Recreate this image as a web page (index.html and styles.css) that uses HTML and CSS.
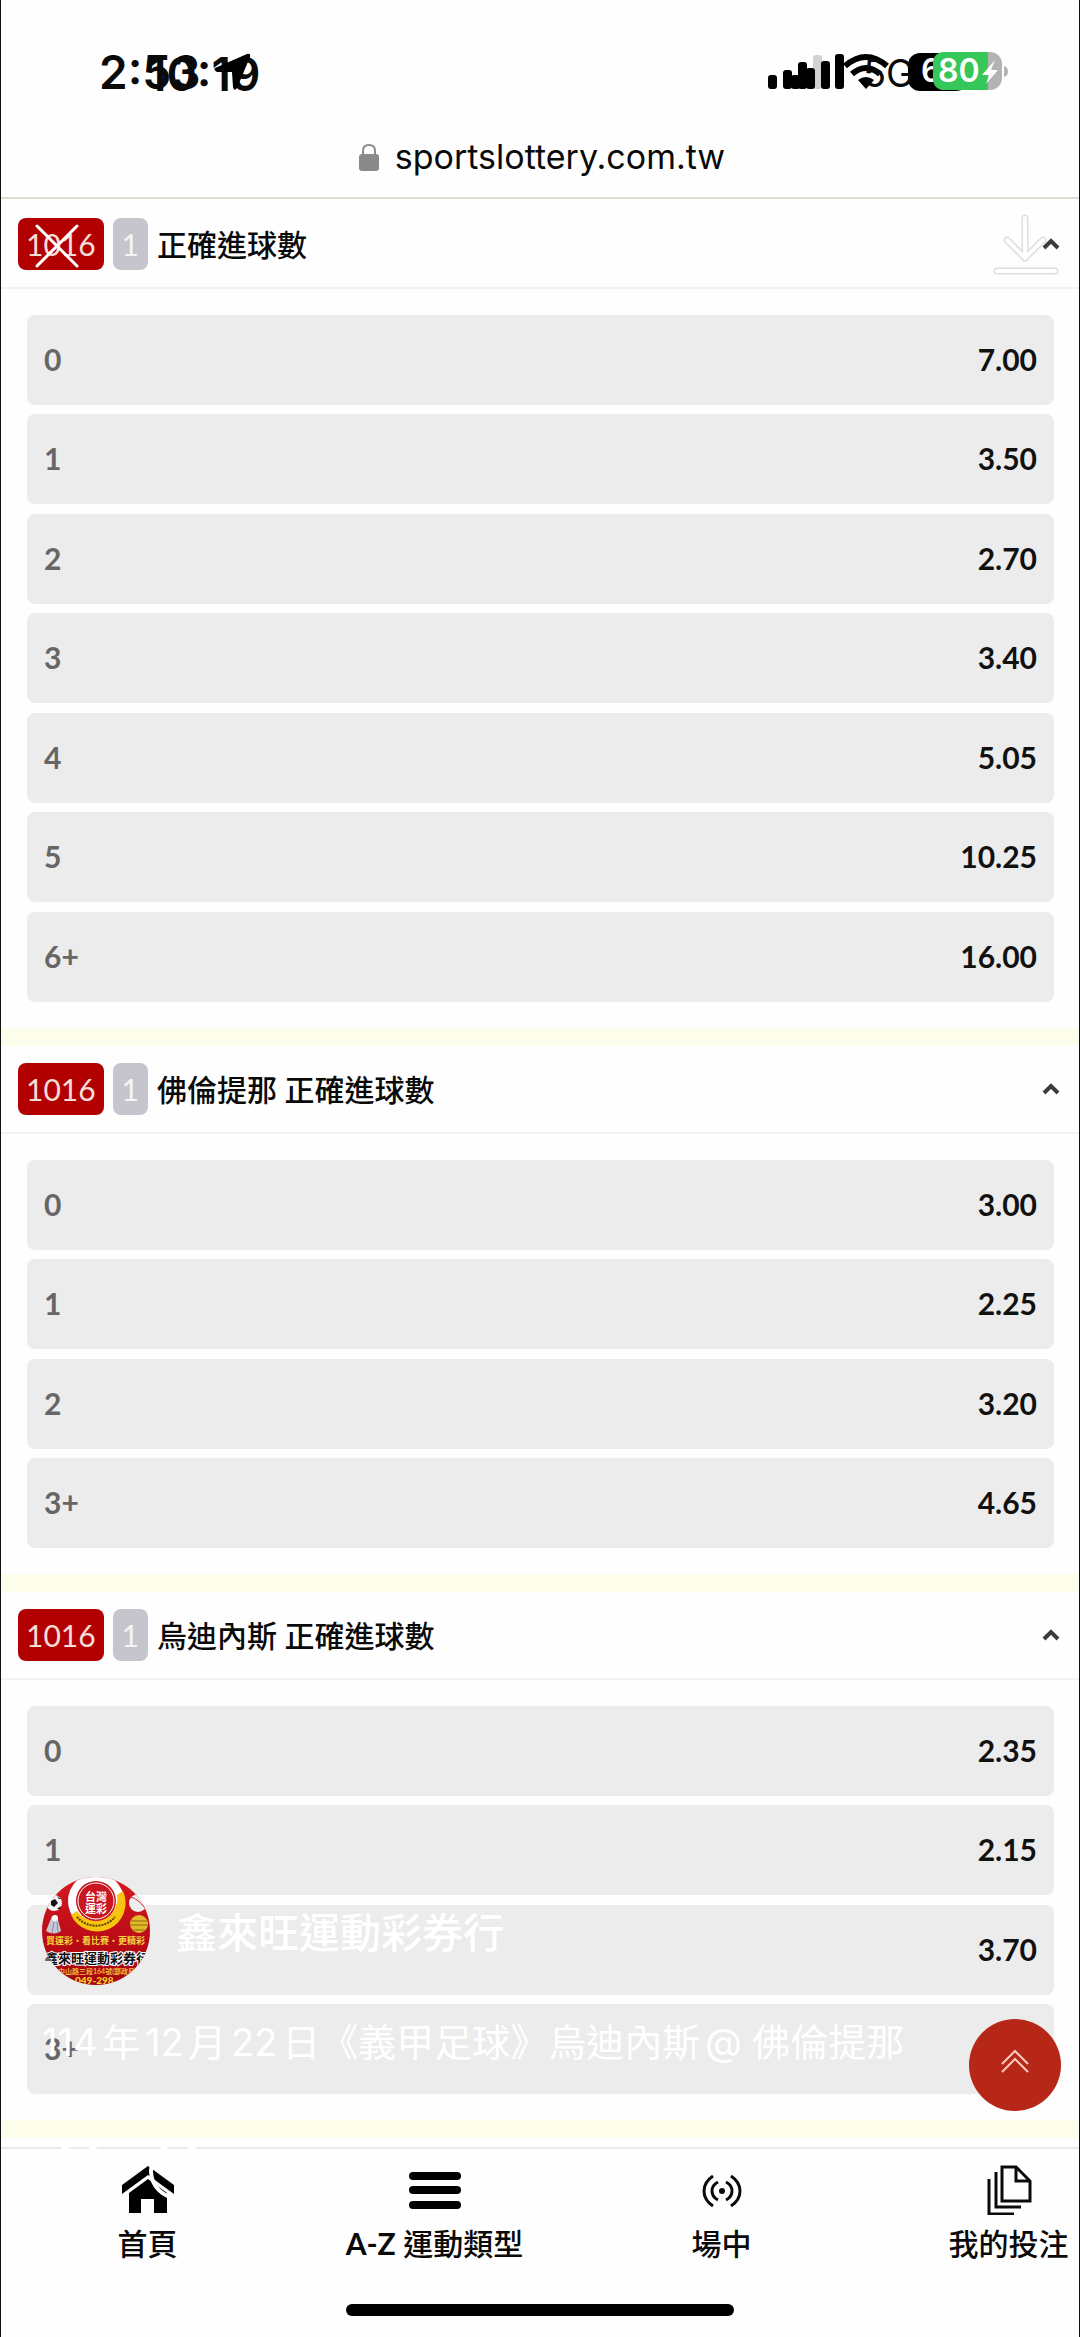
FILE: index.html
```html
<!DOCTYPE html>
<html lang="zh-Hant">

<head>
    <meta charset="utf-8">
    <title>正確進球數</title>
    <meta name="viewport" content="width=device-width, initial-scale=1">
    <link rel="stylesheet" href="styles.css">
</head>

<body>
    <div class="screen">
        <header class="status">
            <div class="clock">
                <span class="time">2:53</span>
                <span class="time time_over">10:19</span>
                <svg class="arrow" width="40" height="38" viewBox="0 0 40 38">
                    <path d="M2 15 L34 1 Q38 0 37 4 L24 35 Q21 39 20 34 L19 19 L4 19 Q0 17 2 15Z" />
                </svg>
            </div>
            <div class="signal">
                <svg width="242" height="42" viewBox="0 0 242 42">
                    <rect x="47" y="5" width="9" height="34" rx="3" fill="#d2d2d2" />
                    <rect x="2" y="25" width="9" height="14" rx="3" />
                    <rect x="17" y="20" width="9" height="19" rx="3" />
                    <rect x="25" y="25" width="9" height="14" rx="3" />
                    <rect x="32" y="12" width="9" height="27" rx="3" />
                    <rect x="40" y="18" width="9" height="21" rx="3" />
                    <rect x="55" y="11" width="9" height="28" rx="3" />
                    <rect x="69" y="4" width="9" height="35" rx="3" />
                    <g fill="none" stroke="#000" stroke-width="6">
                        <path d="M79 16 Q100 -2 121 16" />
                        <path d="M86 24 Q100 12 114 24" />
                    </g>
                    <path d="M92 30 Q100 24 108 30 L100 39Z" />
                    <rect x="142" y="3" width="60" height="38" rx="12" />
                </svg>
                <span class="network">5G</span>
                <span class="battery battery_under">6</span>
                <svg class="charge" width="76" height="42" viewBox="0 0 76 42">
                    <rect x="1" y="2" width="69" height="38" rx="12" fill="#b3b3b3" />
                    <path d="M13 2 H56 V40 H13 Q1 40 1 28 V14 Q1 2 13 2Z" fill="#35c759" />
                    <path d="M72 16 Q76 17 76 22 Q76 26 72 27Z" fill="#b3b3b3" />
                    <path d="M63 10 L50 25 H57 L54 34 L66 20 H59Z" fill="#fff" />
                </svg>
                <span class="battery">80</span>
            </div>
        </header>

        <div class="address">
            <svg width="20" height="28" viewBox="0 0 20 28">
                <path d="M4 12 V8 Q4 2 10 2 Q16 2 16 8 V12" fill="none" stroke="#8a8a8a" stroke-width="2" />
                <rect x="0" y="11" width="20" height="17" rx="3" fill="#8a8a8a" />
            </svg>
            <span>sportslottery.com.tw</span>
        </div>

        <main class="markets">
            <section class="market">
                <button type="button" class="market_head" aria-expanded="true">
                    <span class="code">1016</span>
                    <span class="single">1</span>
                    <span class="name">正確進球數</span>
                    <svg class="chevron" width="18" height="12" viewBox="0 0 18 12"><path d="M2 10 L9 3 L16 10" /></svg>
                </button>
                <ul class="odds">
                    <li><button type="button"><span>0</span><b>7.00</b></button></li>
                    <li><button type="button"><span>1</span><b>3.50</b></button></li>
                    <li><button type="button"><span>2</span><b>2.70</b></button></li>
                    <li><button type="button"><span>3</span><b>3.40</b></button></li>
                    <li><button type="button"><span>4</span><b>5.05</b></button></li>
                    <li><button type="button"><span>5</span><b>10.25</b></button></li>
                    <li><button type="button"><span>6+</span><b>16.00</b></button></li>
                </ul>
            </section>

            <section class="market">
                <button type="button" class="market_head" aria-expanded="true">
                    <span class="code">1016</span>
                    <span class="single">1</span>
                    <span class="name">佛倫提那 正確進球數</span>
                    <svg class="chevron" width="18" height="12" viewBox="0 0 18 12"><path d="M2 10 L9 3 L16 10" /></svg>
                </button>
                <ul class="odds">
                    <li><button type="button"><span>0</span><b>3.00</b></button></li>
                    <li><button type="button"><span>1</span><b>2.25</b></button></li>
                    <li><button type="button"><span>2</span><b>3.20</b></button></li>
                    <li><button type="button"><span>3+</span><b>4.65</b></button></li>
                </ul>
            </section>

            <section class="market">
                <button type="button" class="market_head" aria-expanded="true">
                    <span class="code">1016</span>
                    <span class="single">1</span>
                    <span class="name">烏迪內斯 正確進球數</span>
                    <svg class="chevron" width="18" height="12" viewBox="0 0 18 12"><path d="M2 10 L9 3 L16 10" /></svg>
                </button>
                <ul class="odds">
                    <li><button type="button"><span>0</span><b>2.35</b></button></li>
                    <li><button type="button"><span>1</span><b>2.15</b></button></li>
                    <li><button type="button"><span>2</span><b>3.70</b></button></li>
                    <li><button type="button"><span>3+</span><b></b></button></li>
                </ul>
            </section>
        </main>

        <nav class="tabs">
            <a href="#">
                <svg width="52" height="50" viewBox="0 0 52 50">
                    <path d="M26 1 L52 20 V29 L26 10 L0 29 V20Z" />
                    <path d="M26 14 L45 28 V48 H32 V34 H19 V48 H7 V28Z" />
                </svg>
                <span>首頁</span>
            </a>
            <a href="#">
                <svg width="52" height="50" viewBox="0 0 52 50">
                    <rect x="0" y="7" width="52" height="8" rx="4" />
                    <rect x="0" y="21" width="52" height="8" rx="4" />
                    <rect x="0" y="36" width="52" height="8" rx="4" />
                </svg>
                <span><b>A-Z</b> 運動類型</span>
            </a>
            <a href="#">
                <svg width="52" height="50" viewBox="0 0 52 50" fill="none" stroke="#0a0a0a" stroke-width="3">
                    <path d="M17 11 Q8 17 8 26 Q8 35 17 41 M35 11 Q44 17 44 26 Q44 35 35 41" />
                    <path d="M22 17 Q16 20 16 26 Q16 32 22 35 M30 17 Q36 20 36 26 Q36 32 30 35" />
                    <circle cx="26" cy="26" r="3" fill="#0a0a0a" stroke="none" />
                </svg>
                <span>場中</span>
            </a>
            <a href="#">
                <svg width="52" height="50" viewBox="0 0 52 50" fill="none" stroke="#0a0a0a" stroke-width="3">
                    <path d="M19 2 H33 L47 16 V36 H19Z M33 2 V16 H47" />
                    <path d="M13 7 V42 H38 M6 14 V49 H31" />
                </svg>
                <span>我的投注</span>
            </a>
        </nav>
        <div class="home_bar"></div>

        <!-- story viewer controls -->
        <button type="button" class="close" aria-label="close">
            <svg width="44" height="44" viewBox="0 0 44 44"><path d="M2 2 L42 42 M42 2 L2 42" fill="none" stroke="#fff" stroke-width="3" stroke-linecap="round" /></svg>
        </button>
        <button type="button" class="download" aria-label="download">
            <svg width="66" height="62" viewBox="0 0 66 62" fill="none" stroke-linecap="round" stroke-linejoin="round">
                <path d="M32 4 V44 M14 26 L32 44 L50 26 M4 57 H62" stroke="#dedede" stroke-width="7" />
                <path d="M32 4 V44 M14 26 L32 44 L50 26 M4 57 H62" stroke="#fff" stroke-width="4" />
            </svg>
        </button>

        <div class="post">
            <div class="author">
                <svg width="108" height="108" viewBox="0 0 108 108">
                    <defs>
                        <clipPath id="round"><circle cx="54" cy="54" r="54" /></clipPath>
                        <linearGradient id="red" x1="0" y1="0" x2="0" y2="1">
                            <stop offset="0" stop-color="#d61a22" />
                            <stop offset="0.6" stop-color="#b90b16" />
                            <stop offset="1" stop-color="#a5060e" />
                        </linearGradient>
                    </defs>
                    <g clip-path="url(#round)">
                        <rect width="108" height="108" fill="url(#red)" />
                        <circle cx="54" cy="24" r="28" fill="#fff" />
                        <path d="M81 14 A28 28 0 0 1 29 38 L35 34 A22 22 0 0 0 75 18Z" fill="#f9c410" />
                        <path d="M35 40 A25 25 0 0 0 73 40" fill="none" stroke="#5a4200" stroke-width="2" stroke-dasharray="2 1" />
                        <circle cx="54" cy="24" r="20" fill="#c9151e" />
                        <circle cx="54" cy="24" r="18" fill="none" stroke="#fff" stroke-width="1" />
                        <text class="logo_txt" x="43" y="24">台灣</text>
                        <text class="logo_txt" x="43" y="36">運彩</text>
                        <circle cx="12" cy="26" r="8" fill="#f4f4f4" />
                        <path d="M9 24 L13 22 L16 26 L12 30 L9 28Z M4 22 L7 20 L6 25Z M15 19 L19 22 L17 22Z M15 32 L19 29 L18 32Z" fill="#111" />
                        <circle cx="96" cy="26" r="9" fill="#eee" />
                        <path d="M89 20 Q96 22 103 31" fill="none" stroke="#c33" stroke-width="1" />
                        <path d="M10 39 H15 L19 54 Q12 59 4 54Z" fill="#c9c7d6" />
                        <circle cx="13" cy="41" r="3" fill="#fff" />
                        <path d="M12 45 L10 56 M15 45 L16 56" stroke="#8c88a0" stroke-width="1" />
                        <circle cx="97" cy="47" r="9" fill="#e3b92c" />
                        <path d="M89 44 H105 M88 48 H106 M91 53 H103" stroke="#8d6a10" stroke-width="1" />
                        <text class="slogan" x="4" y="67">買運彩・看比賽・更精彩</text>
                        <text class="shop" x="3" y="86">鑫來旺運動彩券行</text>
                        <text class="street" x="16" y="97">中山路三段164號(郵政局</text>
                        <text class="phone" x="33" y="107">049-298</text>
                    </g>
                </svg>
                <span class="author_name">鑫來旺運動彩券行</span>
            </div>
            <p class="caption">114年12月22日《義甲足球》烏迪內斯@ 佛倫提那</p>
            <svg class="actions" width="170" height="58" viewBox="0 0 170 58" fill="none" stroke="#fff" stroke-width="4">
                <circle cx="37" cy="29" r="27" />
                <circle cx="136" cy="29" r="27" />
            </svg>
        </div>

        <button type="button" class="to_top" aria-label="top">
            <svg width="28" height="26" viewBox="0 0 28 26"><path d="M1 16 L14 3 L27 16 M1 24 L14 11 L27 24" fill="none" stroke="#ffc9bd" stroke-width="2" /></svg>
        </button>
    </div>
</body>

</html>
```
FILE: styles.css
```css
* {
    margin: 0;
    padding: 0;
    box-sizing: border-box;
}

body {
    background-color: #fefefe;
    font-family: Lato, "Noto Sans CJK TC", sans-serif;
    color: #0a0a0a;
}

button {
    border: none;
    background: none;
    font-family: inherit;
    color: inherit;
}

svg {
    display: block;
}

.screen {
    position: relative;
    min-height: 100vh;
    display: flex;
    flex-direction: column;
    overflow: hidden;
    border-left: 1px solid #111;
    border-right: 1px solid #111;
}

/* status bar */
.status {
    height: 124px;
    padding: 44px 71px 0 98px;
    display: flex;
    justify-content: space-between;
    align-items: flex-start;
    font-family: Inter, sans-serif;
}

.clock,
.signal {
    position: relative;
}

.signal {
    padding-top: 6px;
}

.time {
    font-size: 46px;
    line-height: 56px;
    font-weight: 600;
}

.time_over {
    position: absolute;
    left: 48px;
    top: 2px;
}

.arrow {
    position: absolute;
    left: 114px;
    top: 9px;
}

.network,
.battery {
    position: absolute;
    top: 8px;
    line-height: 42px;
}

.network {
    left: 97px;
    font-size: 38px;
}

.battery {
    left: 172px;
    top: 6px;
    font-size: 32px;
    font-weight: 600;
    color: #fff;
}

.battery_under {
    left: 155px;
}

.charge {
    position: absolute;
    right: 0;
    top: 6px;
}

.address {
    height: 73px;
    padding: 0 0 8px 4px;
    display: flex;
    justify-content: center;
    align-items: center;
    gap: 16px;
    font-family: Inter, sans-serif;
    font-size: 34px;
}

/* markets */
.markets {
    border-top: 2px solid #dcddd3;
    padding: 2px 0 9px;
}

.market {
    border-bottom: 18px solid #fdfdec;
}

.market_head {
    width: 100%;
    height: 88px;
    padding: 0 19px 0 17px;
    display: flex;
    align-items: center;
    gap: 9px;
    border-bottom: 2px solid #f2f2f2;
    font-size: 30px;
}

.code,
.single {
    height: 52px;
    padding: 0 8px;
    border-radius: 8px;
    line-height: 52px;
    color: #f6dcd8;
    background-color: #b20000;
}

.single {
    padding: 0 9px;
    color: #f5f5f8;
    background-color: #c6c5cd;
}

.name {
    padding-bottom: 2px;
    font-weight: 500;
}

.chevron {
    margin-left: auto;
    fill: none;
    stroke: #3c3c3c;
    stroke-width: 4;
}

.odds {
    list-style-type: none;
    padding: 26px 25px 26px 26px;
}

.odds li:not(:last-child) {
    margin-bottom: 10px;
}

.odds li:not(:last-child):nth-child(odd) {
    margin-bottom: 9px;
}

.odds button {
    width: 100%;
    height: 90px;
    padding: 0 17px 2px;
    display: flex;
    justify-content: space-between;
    align-items: center;
    border-radius: 8px;
    background-color: #ececec;
    font-size: 30px;
}

.odds span {
    color: #666;
    font-weight: 700;
}

.odds b {
    color: #111;
    font-weight: 700;
}

/* bottom tabs */
.tabs {
    padding: 16px 0 0 3px;
    display: flex;
    border-top: 2px solid #e9e9ee;
}

.tabs a {
    flex: 0 0 287px;
    display: flex;
    flex-direction: column;
    align-items: center;
    gap: 6px;
    font-size: 30px;
    line-height: 44px;
    font-weight: 500;
    color: #0a0a0a;
    text-decoration: none;
}

.home_bar {
    width: 36%;
    height: 12px;
    margin: 39px auto 21px;
    border-radius: 6px;
    background-color: #000;
}

/* over the page */
.close {
    position: absolute;
    left: 34px;
    top: 224px;
}

.download {
    position: absolute;
    right: 20px;
    top: 214px;
}

.post {
    position: absolute;
    left: 41px;
    bottom: 137px;
    color: #fff;
    pointer-events: none;
}

.author {
    display: flex;
    align-items: center;
    gap: 26px;
}

.author_name {
    padding-bottom: 2px;
    font-size: 41px;
    font-weight: 500;
}

.caption {
    margin: 32px 0 75px;
    font-family: Inter, "Noto Sans CJK TC", sans-serif;
    font-size: 38px;
    line-height: 50px;
    font-weight: 400;
    text-autospace: normal;
    white-space: nowrap;
}

.to_top {
    position: absolute;
    right: 18px;
    bottom: 226px;
    width: 92px;
    height: 92px;
    padding-bottom: 8px;
    display: flex;
    justify-content: center;
    align-items: center;
    border-radius: 50%;
    background-color: #b62718;
}

/* avatar */
.logo_txt {
    font-size: 11px;
    font-weight: 700;
    fill: #fff;
}

.slogan {
    font-size: 9px;
    font-weight: 700;
    fill: #f6d33c;
}

.shop {
    font-size: 13px;
    font-weight: 700;
    fill: #111;
    stroke: #fff;
    stroke-width: 2px;
    paint-order: stroke;
}

.street {
    font-size: 7px;
    font-weight: 700;
    fill: #f0b93a;
}

.phone {
    font-size: 10px;
    font-weight: 900;
    fill: #f9d22c;
}
```
